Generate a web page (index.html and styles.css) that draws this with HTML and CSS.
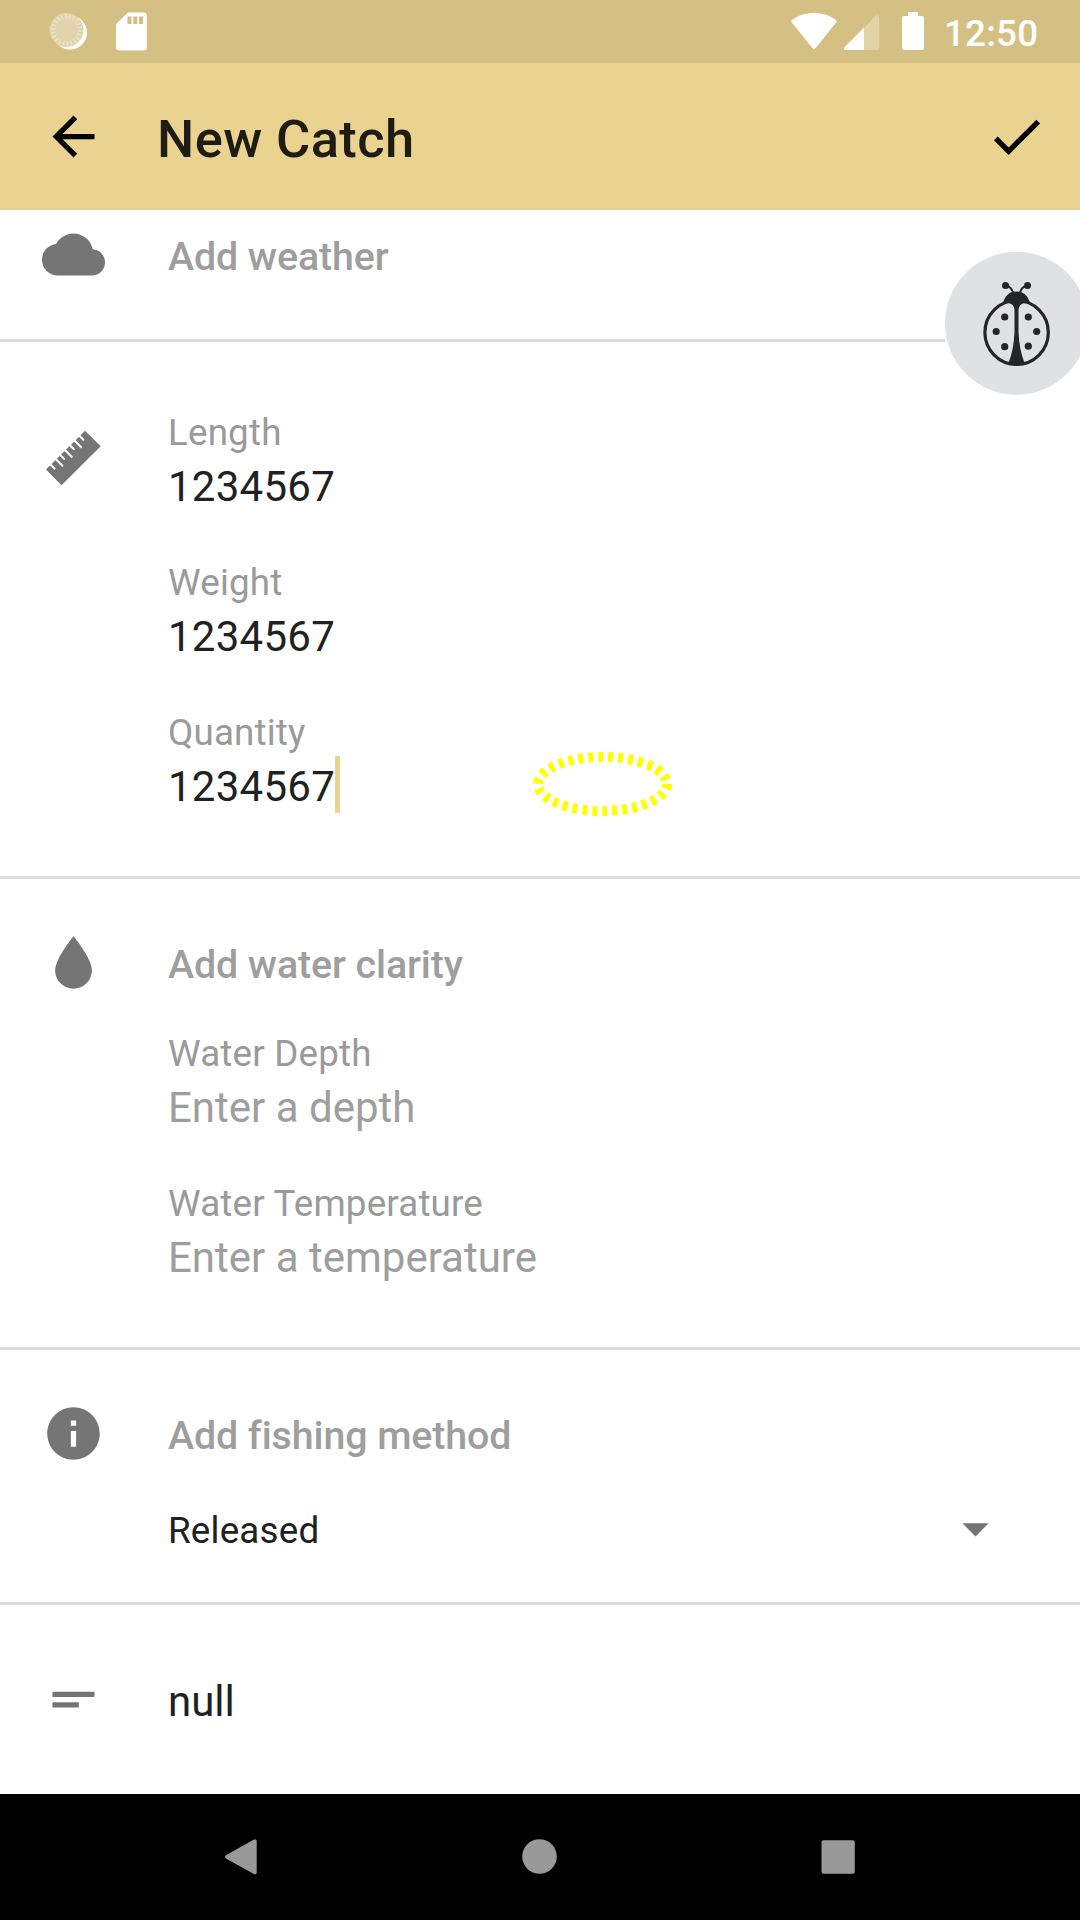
FILE: index.html
```html
<!DOCTYPE html>
<html lang="en">
<head>
<meta charset="utf-8">
<title>New Catch</title>
<link rel="stylesheet" href="styles.css">
</head>
<body>
<div class="screen">
  <header class="status-bar">
    <svg class="status-left" width="160" height="63" viewBox="0 0 160 63">
      <circle cx="70" cy="32.5" r="17" fill="#fff"/>
      <circle cx="66.5" cy="30" r="17" fill="#e1d4ac"/>
      <circle cx="66.5" cy="30" r="13.5" fill="none" stroke="#eae0c4" stroke-width="5" stroke-dasharray="1.8 2.055"/>
      <path fill="#fff" fill-rule="evenodd" d="M128 12.500h15.500a3.300 3.300 0 0 1 3.300 3.300v31.500a3.300 3.300 0 0 1-3.300 3.300h-24.200a3.300 3.300 0 0 1-3.300-3.300V24zM127.500 16.500v7.500h4v-7.500zM133.300 16.500v7.500h4v-7.500zM139 16.500v7.500h4v-7.500z"/>
    </svg>
    <div class="status-right">
      <svg width="136" height="63" viewBox="790 0 136 63" fill="#fff">
        <path d="M814 13c8.500 0 16 2.500 22 7 .7.500.8 1.500.300 2.200L815.500 48.200c-.8 1-2.200 1-3 0L791.700 22.200c-.5-.7-.4-1.700.300-2.200 6-4.500 13.500-7 22-7z"/>
        <path opacity=".3" d="M864 28l11.700-12.200c1.200-1.300 3.300-.600 3.300 1.200v30.500a2.500 2.500 0 0 1-2.500 2.500H864z"/>
        <path d="M864 27.500V50h-18.500c-1.500 0-2.100-1.600-1.200-2.600z"/>
        <path d="M908 12h10v4h4a2 2 0 0 1 2 2v30a2 2 0 0 1-2 2h-18a2 2 0 0 1-2-2V18a2 2 0 0 1 2-2h4z"/>
      </svg>
      <span class="clock">12:50</span>
    </div>
  </header>
  <div class="toolbar">
    <svg class="icon" viewBox="0 0 24 24"><path d="M20 11H7.830l5.590-5.590L12 4l-8 8 8 8 1.410-1.410L7.830 13H20z"/></svg>
    <h1 class="title">New Catch</h1>
    <svg class="icon" viewBox="0 0 24 24"><path d="M9 16.170L4.830 12l-1.420 1.410L9 19 21 7l-1.410-1.410z"/></svg>
  </div>
  <main class="form">
    <section class="section weather">
      <svg class="icon" viewBox="0 0 24 24"><path d="M19.350 10.040C18.670 6.590 15.640 4 12 4 9.110 4 6.600 5.640 5.350 8.040 2.340 8.360 0 10.910 0 14c0 3.310 2.690 6 6 6h13c2.760 0 5-2.240 5-5 0-2.640-2.050-4.780-4.650-4.960z"/></svg>
      <div class="fields"><div class="add">Add weather</div></div>
    </section>
    <section class="section size">
      <svg class="icon" viewBox="42 426 63 63"><path d="M46 469.500L85 430.700 100.700 446.300 61.500 485.300z"/><path stroke="#fff" stroke-width="2" stroke-linecap="round" d="M50 464l4.500 4.500M55.300 458.600l7.200 7.200M59.700 454.400l4.500 4.500M64.500 449.500l7.200 7.200M69.400 444.700l4.500 4.500M74 440l7.200 7.200M78.900 435.200l4.500 4.500"/></svg>
      <div class="fields">
        <div class="field"><label class="label">Length</label><div class="value number">1234567</div></div>
        <div class="field"><label class="label">Weight</label><div class="value number">1234567</div></div>
        <div class="field"><label class="label">Quantity</label><div class="value number">1234567<i class="caret"></i></div></div>
      </div>
    </section>
    <section class="section water">
      <svg class="icon" viewBox="0 0 24 24"><path d="M12 2C12 2 5 10.400 5 15a7 7 0 0 0 14 0C19 10.400 12 2 12 2z"/></svg>
      <div class="fields">
        <div class="add">Add water clarity</div>
        <div class="field"><label class="label">Water Depth</label><div class="value hint">Enter a depth</div></div>
        <div class="field"><label class="label">Water Temperature</label><div class="value hint">Enter a temperature</div></div>
      </div>
    </section>
    <section class="section method">
      <svg class="icon" viewBox="0 0 24 24"><path d="M12 2C6.480 2 2 6.480 2 12s4.480 10 10 10 10-4.480 10-10S17.520 2 12 2zm1 15h-2v-6h2v6zm0-8h-2V7h2v2z"/></svg>
      <div class="fields">
        <div class="add">Add fishing method</div>
        <div class="select"><span>Released</span><svg class="icon" viewBox="0 0 24 24"><path d="M7 10l5 5 5-5z"/></svg></div>
      </div>
    </section>
    <section class="section notes">
      <svg class="icon" viewBox="0 0 24 24"><path d="M4 9h16v2H4zM4 13h10v2H4z"/></svg>
      <div class="fields"><div class="value">null</div></div>
    </section>
  </main>
  <nav class="nav-bar">
    <svg width="63" height="63" viewBox="210 1826 63 63"><path d="M253.500 1839.800c1.500-1.200 3.200-.4 3.200 1.400v31.200c0 1.800-1.700 2.600-3.200 1.400l-27.600-15.400c-1.200-1-1.200-2.300 0-3.200z"/></svg>
    <svg width="63" height="63" viewBox="508 1826 63 63"><circle cx="539.500" cy="1856.500" r="17.300"/></svg>
    <svg width="63" height="63" viewBox="806 1826 63 63"><rect x="821.500" y="1840.300" width="33.300" height="33.500" rx="2"/></svg>
  </nav>
  <svg class="highlight" viewBox="525 742 156 84"><ellipse cx="602.500" cy="784" rx="64.500" ry="27"/></svg>
  <div class="bug-button">
    <svg viewBox="0 0 160 180" width="160" height="180">
      <circle cx="96.500" cy="93.300" r="71.500" fill="#e0e1e3"/>
      <g fill="#232529">
        <ellipse cx="96.600" cy="102.500" rx="31.700" ry="32" fill="none" stroke="#232529" stroke-width="3.200"/>
        <path d="M83 73c2-7 6-11.500 13.500-11.500S108 66 110 73c-4 0-8 0-10 2.500-1 1.500-1.500 3-1.500 5V102c.5 12 2.500 22 6 31-5 3.500-11 3.500-16 0 3.500-9 5.500-19 6-31V80.500c0-2-.5-3.500-1.500-5-2-2.500-6-2.500-10-2.500z"/>
        <path d="M86 55.500q5.500 1.500 7 7M107 55.500q-5.500 1.500-7 7" fill="none" stroke="#232529" stroke-width="2"/>
        <circle cx="85.500" cy="55.500" r="3.500"/><circle cx="107.500" cy="55.500" r="3.500"/>
        <circle cx="84.700" cy="87" r="3.600"/><circle cx="108.300" cy="87" r="3.600"/>
        <circle cx="76.200" cy="101.500" r="3.600"/><circle cx="116.700" cy="101.500" r="3.600"/>
        <circle cx="84.700" cy="116.700" r="3.600"/><circle cx="108.300" cy="116.200" r="3.600"/>
      </g>
    </svg>
  </div>
</div>
</body>
</html>
```
FILE: styles.css
```css
* { box-sizing: border-box; }
body { margin: 0; font-family: Roboto, "Liberation Sans", sans-serif; }
.screen { position: relative; width: 1080px; height: 1920px; overflow: hidden; display: flex; flex-direction: column; background: #fff; color: #212121; }
.status-bar { height: 63px; background: #d5c083; display: flex; justify-content: space-between; }
.status-right { display: flex; width: 290px; gap: 18px; }
.clock { color: #fff; font-size: 36.75px; font-weight: 500; line-height: 68px; letter-spacing: .2px; }
.toolbar { height: 147px; padding: 0 32px 0 42px; background: #ead291; display: flex; align-items: center; }
.title { flex: 1; margin: 0; padding: 5px 0 0 52px; font-size: 52.5px; line-height: 63px; font-weight: 500; letter-spacing: .4px; color: #1f1c13; }
.icon { width: 63px; height: 63px; flex: none; display: block; }
.form { flex: 1; min-height: 0; }
.section { display: flex; gap: 63px; padding: 0 42px; border-bottom: 3px solid #dcdcdc; }
.section > .icon, .select .icon { fill: #757575; }
.fields { flex: 1; }
.add { font-size: 39.375px; line-height: 50px; font-weight: 500; letter-spacing: -.1px; color: #9e9e9e; }
.label { display: block; margin-bottom: 4px; font-size: 36.75px; line-height: 44px; letter-spacing: .18px; color: #9a9a9a; }
.value { font-size: 42px; line-height: 56px; white-space: nowrap; }
.number { letter-spacing: .25px; }
.hint { color: #9e9e9e; }
.field { height: 150px; }
.weather { height: 132px; padding-top: 13px; }
.weather .add { padding-top: 9px; }
.size { height: 537px; padding-top: 84px; }
.size .fields { margin-top: -15px; }
.water { height: 471px; padding-top: 52px; }
.water .add { padding-top: 9px; height: 101px; }
.method { height: 255px; padding-top: 52px; }
.method .add { padding-top: 9px; }
.select { display: flex; align-items: center; justify-content: space-between; height: 63px; margin-top: 36px; font-size: 36.75px; letter-spacing: .2px; padding-right: 31px; }
.select span { padding-top: 4px; }
.notes { border-bottom: 0; padding-top: 63px; }
.notes .fields { padding-top: 6px; }
.caret { display: inline-block; width: 5px; height: 57px; margin: -10px 0 0 0; background: #ead291; vertical-align: -12px; }
.nav-bar { height: 126px; padding: 0 211px 0 210px; display: flex; align-items: center; justify-content: space-between; background: #000; fill: #999; }
.highlight { position: absolute; left: 525px; top: 742px; width: 156px; height: 84px; fill: none; stroke: #ff0; stroke-width: 10px; stroke-dasharray: 5 5; }
.bug-button { position: absolute; left: 945px; top: 251px; width: 135px; height: 145px; overflow: hidden; background: #fff; }
.bug-button svg { display: block; margin: -21px 0 0 -25px; }
```
